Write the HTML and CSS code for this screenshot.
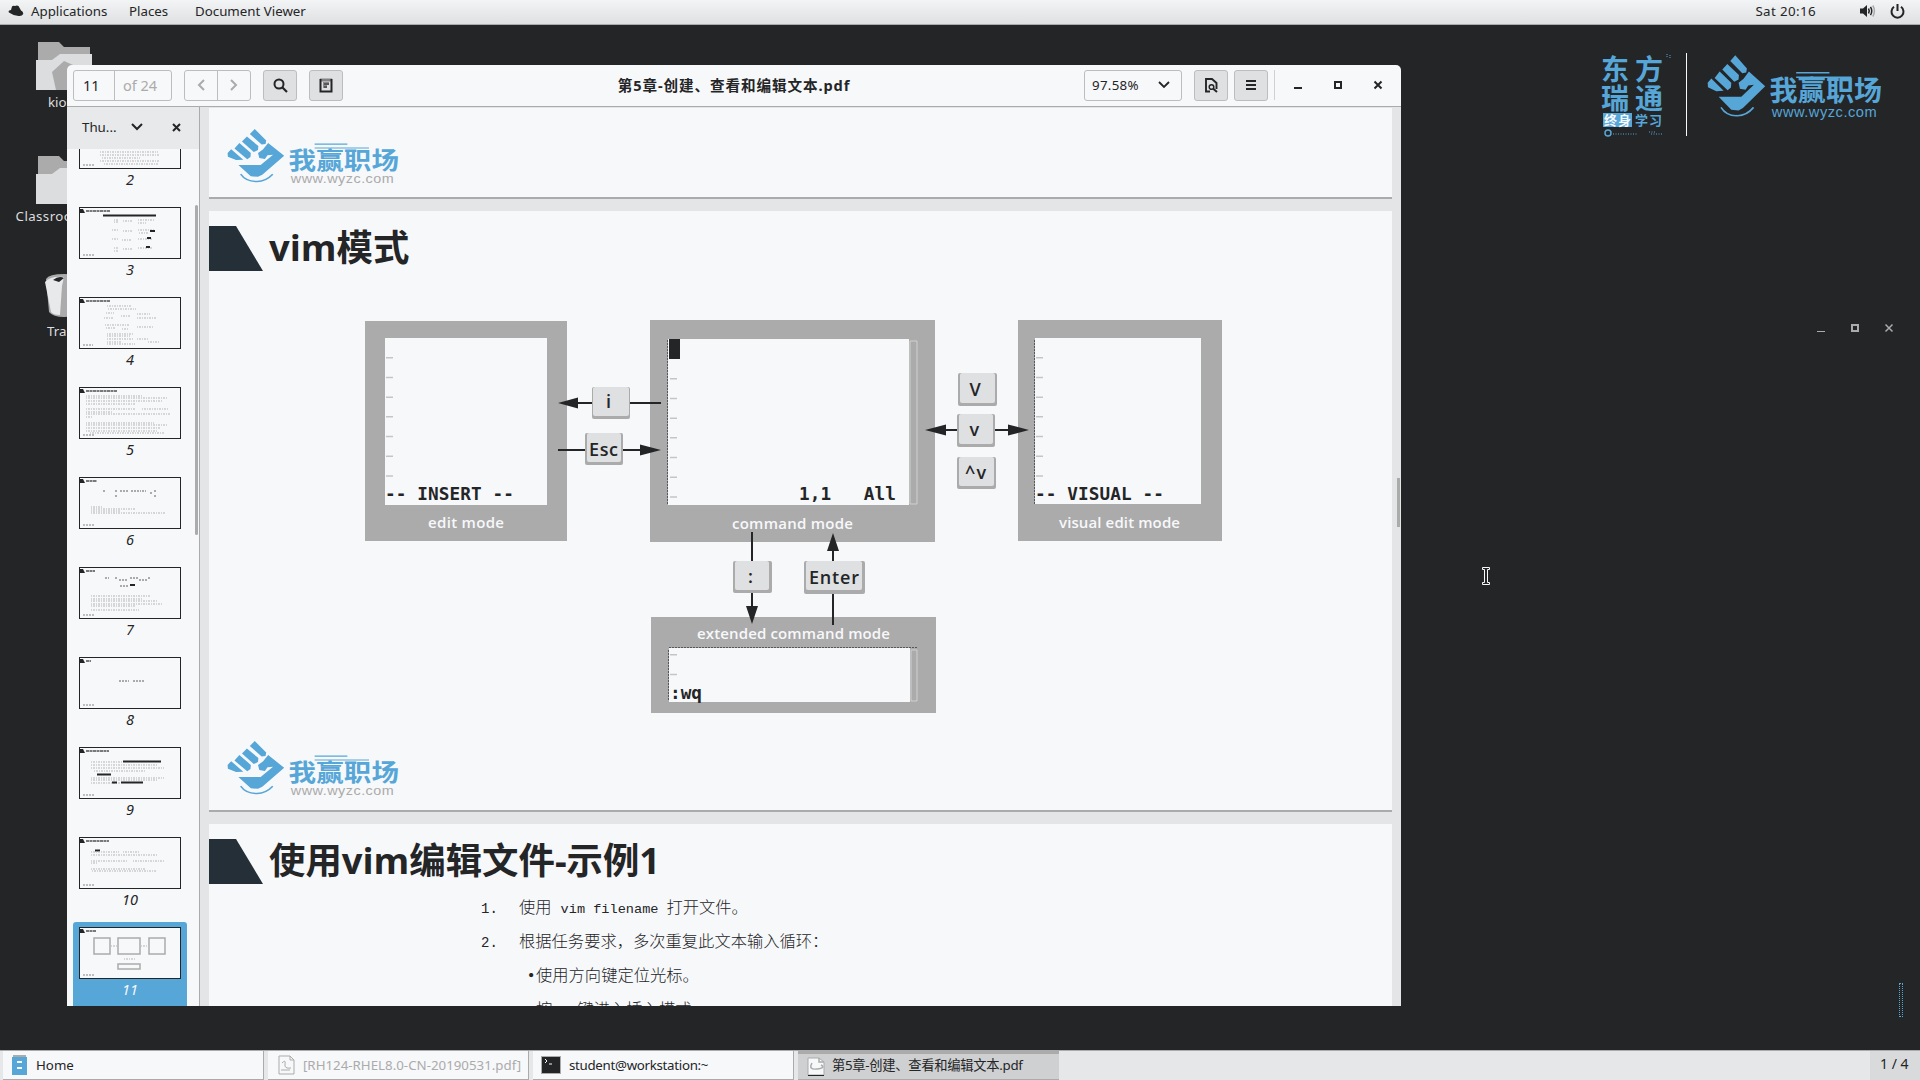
FILE: index.html
```html
<!DOCTYPE html>
<html lang="zh-CN">
<head>
<meta charset="utf-8">
<title>第5章-创建、查看和编辑文本.pdf</title>
<link rel="stylesheet" href="styles.css">
</head>
<body>
<svg class="defs" width="0" height="0">
  <symbol id="brand" viewBox="430 160 550 205" preserveAspectRatio="none">
    <path d="M527 167L562 207L560 219L548 221L512 184ZM503 193L538 226L537 240L524 247L488 210ZM480 216L515 250L514 264L504 272L465 235ZM455 237L492 274L470 275L445 263L444 250Z" fill="currentColor"/>
    <path d="M568 216L617 260L550 326L537 333L515 331L477 292L545 292L583 256L566 258L558 271L541 268L537 250L552 238Z" fill="currentColor"/>
    <path d="M484 324Q500 350 532 349Q560 350 582 324" fill="none" stroke="currentColor" stroke-width="5"/>
    <path d="M710 217H810V222H710ZM710 231H876V235H710Z" fill="currentColor"/>
    <text class="brand-name" x="630" y="306" textLength="338">我赢职场</text>
    <text class="brand-url" x="637" y="353" textLength="315">www.wyzc.com</text>
  </symbol>
</svg>

<header class="topbar">
  <svg width="16" height="12" viewBox="0 0 16 12"><path d="M4 1.5Q5 .3 7 1Q9 0 10.500 1L13 5.500Q15.500 6.500 15.200 9Q14 11.500 10.500 11Q5 10.500 1 7.500Q-.5 5.500 3 5Z" fill="#242527"/></svg>
  <span class="app">Applications</span><span class="places">Places</span><span class="viewer">Document Viewer</span>
  <span class="clock">Sat 20:16</span>
  <svg class="vol" width="16" height="14" viewBox="0 0 16 14"><path d="M0 4.500H3L7 1V13L3 9.500H0Z" fill="#242527"/><path d="M8.500 4.500Q10 7 8.500 9.500M10.500 2.800Q13 7 10.500 11.200" fill="none" stroke="#242527" stroke-width="1.500"/><path d="M12.800 1.500Q16 7 12.800 12.500" fill="none" stroke="#ababab" stroke-width="1.500"/></svg>
  <svg width="15" height="15" viewBox="0 0 15 15"><path d="M4 2.800A6 6 0 1 0 11 2.800M7.500 0V7" fill="none" stroke="#242527" stroke-width="2"/></svg>
</header>

<main class="desktop">
  <div class="shortcut home"><svg width="56" height="48" viewBox="0 0 56 48"><path d="M2 0H23L28 5H54V20H2Z" fill="#ababab"/><path d="M0 18H16L24 12H56V48H0Z" fill="#dcddde"/><path d="M16 30L28 19L44 26V48H20Z" fill="#ababab"/></svg><span>kiosk</span></div>
  <div class="shortcut room"><svg width="56" height="48" viewBox="0 0 56 48"><path d="M2 0H23L28 5H54V20H2Z" fill="#ababab"/><path d="M0 18H16L24 12H56V48H0Z" fill="#dcddde"/></svg><span>Classroom Env</span></div>
  <div class="shortcut trash"><svg width="38" height="44" viewBox="0 0 38 44"><path d="M1 5Q4 0 19 0T37 5L34 38Q30 43 19 43T4 38Z" fill="#ababab"/><path d="M0 8Q5 2 19 3L17 12L15 41Q8 41 6 38Z" fill="#e8e9ea"/><path d="M8 6Q14 1 19 4L14 8Z" fill="#242527"/></svg><span>Trash</span></div>

  <div class="sponsor">
    <svg class="sponsor-left" width="70" height="86" viewBox="0 0 70 86">
      <text class="big" x="1" y="27" textLength="62">东方</text>
      <text class="big" x="1" y="56" textLength="62">瑞通</text>
      <rect x="3" y="60" width="29" height="14" fill="#56a6d8"/>
      <text class="small inv" x="4" y="72" textLength="27">终身</text>
      <text class="small" x="35" y="72" textLength="27">学习</text>
      <path d="M67 1V4M70 2V5" stroke="#56a6d8" stroke-dasharray="1 1"/>
      <circle cx="8" cy="80" r="3" fill="none" stroke="#56a6d8" stroke-width="1.500"/>
      <path d="M13 81H38M49 79H55M51 81H62" fill="none" stroke="#56a6d8" stroke-dasharray="1 1.500"/>
    </svg>
    <i class="rule"></i>
    <svg class="sponsor-brand" width="183" height="68"><use href="#brand"/></svg>
  </div>

  <div class="ghost-controls">
    <svg width="80" height="10" viewBox="0 0 80 10" fill="none" stroke="#ababab"><path d="M1 8.500H9"/><rect x="36" y="2" width="6" height="6" stroke-width="2"/><path d="M69.500 1.500L76.500 8.500M76.500 1.500L69.500 8.500" stroke-width="1.500"/></svg>
  </div>
  <svg class="pointer" width="8" height="18" viewBox="0 0 8 18"><path d="M.5 .5H7.500V2.500H5.500V15.500H7.500V17.500H.5V15.500H2.500V2.500H.5Z" fill="#242527" stroke="#f7f8fa"/></svg>
  <i class="blue-mark"></i>

  <section class="window">
    <div class="headerbar">
      <div class="group">
        <div class="entry"><span class="cur">11</span><span class="total">of 24</span></div>
        <div class="nav"><span><svg width="8" height="12"><path d="M7 1L2 6L7 11" fill="none" stroke="#ababab" stroke-width="2"/></svg></span><span><svg width="8" height="12"><path d="M1 1L6 6L1 11" fill="none" stroke="#ababab" stroke-width="2"/></svg></span></div>
        <div class="btn"><svg width="15" height="15" viewBox="0 0 15 15"><circle cx="6" cy="6" r="4.500" fill="none" stroke="#242527" stroke-width="2"/><path d="M9 9L14 14" stroke="#242527" stroke-width="2.200"/></svg></div>
        <div class="btn"><svg width="14" height="16" viewBox="0 0 14 16"><path d="M1.500 2V14.500H12.500V2" fill="none" stroke="#242527" stroke-width="2"/><path d="M1.500 3H12.500" stroke="#242527" stroke-width="3" stroke-dasharray="1 1"/><path d="M4 5H10V8H8V11H4Z" fill="#8a8b8c"/><path d="M5 7H10M5 10H8" stroke="#242527"/></svg></div>
      </div>
      <h1>第5章-创建、查看和编辑文本.pdf</h1>
      <div class="group right">
        <div class="zoombox"><span>97.58%</span><svg width="12" height="8"><path d="M1 1L6 6L11 1" fill="none" stroke="#242527" stroke-width="1.800"/></svg></div>
        <div class="btn"><svg width="13" height="15" viewBox="0 0 13 15"><path d="M5 13.500H1V1H7L11.500 5V11" fill="none" stroke="#242527" stroke-width="1.900"/><circle cx="6.500" cy="9" r="2.300" fill="none" stroke="#242527" stroke-width="1.500"/><path d="M8 10.500L12 14" stroke="#242527" stroke-width="2"/></svg></div>
        <div class="btn menu"><svg width="10" height="10"><path d="M0 1H10M0 5H10M0 9H10" stroke="#242527" stroke-width="2"/></svg></div>
        <i class="sep"></i>
        <div class="controls"><svg width="90" height="10" viewBox="0 0 90 10" fill="none" stroke="#242527"><path d="M1 8H9" stroke-width="2"/><rect x="42" y="2" width="6" height="6" stroke-width="2"/><path d="M81.500 1.500L88.500 8.500M88.500 1.500L81.500 8.500" stroke-width="2"/></svg></div>
      </div>
    </div>
    <div class="body">
      <aside class="sidebar">
        <div class="side-head"><span>Thu...</span><svg class="chev" width="12" height="8"><path d="M1 1L6 6L11 1" fill="none" stroke="#242527" stroke-width="2"/></svg><svg width="9" height="9"><path d="M1 1L8 8M8 1L1 8" stroke="#242527" stroke-width="2"/></svg></div>
        <div class="thumb-view">
          <ol class="thumbs">
            <li><svg viewBox="0 0 100 50"><path class="t" d="M20 34H78M20 37H80M22 40H60M20 43H80M24 46H78"/><path class="u" d="M3 47H15"/></svg><b>2</b></li>
            <li><svg viewBox="0 0 100 50"><path class="w" d="M0 1H3L5 5H0Z"/><path class="h" d="M6 3H30"/><path class="k" d="M23 7.500H76"/><path class="t" d="M34 12H38M43 13H52M58 12H74M34 14H38M58 15H66M32 22H38M43 23H52M58 22H74M59 25H68M32 31H38M42 32H52M58 31H72M34 40H38M43 41H52M58 40H72M34 43H38"/><path class="k" d="M70 23H75M67 30H71M66 39H70"/><path class="u" d="M3 47H15"/></svg><b>3</b></li>
            <li><svg viewBox="0 0 100 50"><path class="w" d="M0 1H3L5 5H0Z"/><path class="h" d="M6 3H30"/><path class="t" d="M27 8H52M28 11H56M26 15H34M41 18H50M57 16H70M24 20H34M57 20H76M25 27H50M26 30H36M42 31H49M57 29H73M27 36H54M27 38H50M27 41H54M27 44H42M57 41H68M27 46H55M68 44H79"/><path class="u" d="M3 47H13"/></svg><b>4</b></li>
            <li><svg viewBox="0 0 100 50"><path class="w" d="M0 1H3L5 5H0Z"/><path class="h" d="M6 3H37"/><path class="t" d="M6 8H63M6 10H88M6 13H83M6 16H55M6 21H56M62 21H88M6 24H33M6 26H90M6 29H13M6 35H74M6 37H88M6 40H80M6 43H77M10 45H84"/><path class="u" d="M3 47H15"/></svg><b>5</b></li>
            <li><svg viewBox="0 0 100 50"><path class="w" d="M0 1H3L5 5H0Z"/><path class="h" d="M6 3H17"/><path class="d" d="M23 13H26M35 13H38M40 13H48M51 13H61M62 13H66M70 15H73M74 13H77M35 18H38M74 18H77"/><path class="t" d="M11 29H23M11 31H55M11 33H40M11 35H85"/><path class="u" d="M3 47H15"/></svg><b>6</b></li>
            <li><svg viewBox="0 0 100 50"><path class="w" d="M0 1H3L5 5H0Z"/><path class="h" d="M6 3H15"/><path class="d" d="M25 10H29M35 10H38M39 12H48M50 10H58M59 12H67M68 10H71M40 18H49"/><path class="k" d="M50 17H55"/><path class="t" d="M11 28H70M11 31H62M11 33H77M11 36H83M11 38H55M11 42H59"/><path class="u" d="M3 47H15"/></svg><b>7</b></li>
            <li><svg viewBox="0 0 100 50"><path class="w" d="M0 1H3L5 5H0Z"/><path class="h" d="M6 3H11"/><path class="d" d="M39 23H49M53 23H64"/><path class="u" d="M3 47H15"/></svg><b>8</b></li>
            <li><svg viewBox="0 0 100 50"><path class="w" d="M0 1H3L5 5H0Z"/><path class="h" d="M6 3H29"/><path class="t" d="M11 14H42M11 17H78M11 20H84M14 23H65M11 30H84M11 32H78M11 35H40"/><path class="k" d="M43 13.500H81M17 26.500H31M32 34.500H37M41 34.500H63"/><path class="u" d="M3 47H15"/></svg><b>9</b></li>
            <li><svg viewBox="0 0 100 50"><path class="w" d="M0 1H3L5 5H0Z"/><path class="h" d="M6 3H29"/><path class="k" d="M15 12.500H20"/><path class="t" d="M11 14H39M43 14H60M11 17H78M11 23H48M53 23H84M11 25H18M11 31H65M12 33H77"/><path class="u" d="M3 47H15"/></svg><b>10</b></li>
            <li class="selected"><svg viewBox="0 0 100 50"><path class="w" d="M0 1H3L5 5H0Z"/><path class="h" d="M6 3H16"/><path d="M14 10H30V26H14ZM38 10H60V26H38ZM69 10H85V26H69ZM38 36H60V41H38Z" fill="none" stroke="#ababab" stroke-width="1.500"/><path class="t" d="M31 18H38M61 18H68M44 31H55"/><path class="u" d="M3 47H15"/></svg><b>11</b></li>
          </ol>
          <i class="side-scroll"></i>
        </div>
      </aside>
      <div class="document">
        <article class="page first"><svg class="brand" width="180" height="59"><use href="#brand"/></svg></article>
        <article class="page middle">
          <h2><svg width="54" height="45"><path d="M0 0H27L54 45H0Z" fill="#242f37"/></svg><span>vim模式</span></h2>
          <svg class="diagram" width="1183" height="440" viewBox="209 290 1183 440">
            <g fill="#ababab"><path d="M365 321H567V541H365ZM650 320H935V542H650ZM1018 320H1222V541H1018ZM651 617H936V713H651Z"/></g>
            <g fill="#f7f8fa"><path d="M385 338H547V505H385ZM668 339H909V505H668ZM1035 338H1201V504H1035ZM669 648H910V702H669Z"/></g>
            <path d="M910 341H917V504H910ZM911 650H917V701H911Z" fill="none" stroke="#cfd0d1"/>
            <path d="M667.500 340V504M1034.500 340V504M668.500 650V700M669 647.500H917" fill="none" stroke="#55575a" stroke-dasharray="2 1"/>
            <g stroke="#c4c5c6" stroke-width="1.500" fill="none">
              <path d="M389.500 357V480" stroke-width="7" stroke-dasharray="1.500 18.200"/>
              <path d="M673.500 378V500" stroke-width="7" stroke-dasharray="1.500 18.200"/>
              <path d="M1039.500 357V480" stroke-width="7" stroke-dasharray="1.500 18.200"/>
              <path d="M673.500 654V680" stroke-width="7" stroke-dasharray="1.500 18.200"/>
            </g>
            <rect x="669" y="339" width="11" height="20" fill="#242527"/>
            <g class="term">
              <text x="385" y="500" textLength="129">-- INSERT --</text>
              <text x="799" y="500" textLength="97">1,1   All</text>
              <text x="1035" y="500" textLength="129">-- VISUAL --</text>
              <text x="670" y="699" textLength="32">:wq</text>
            </g>
            <g class="mode">
              <text x="428" y="528" textLength="76">edit mode</text>
              <text x="732" y="529" textLength="121">command mode</text>
              <text x="1059" y="528" textLength="121">visual edit mode</text>
              <text x="697" y="639" textLength="193">extended command mode</text>
            </g>
            <path d="M576 403H661M558 450H642M944 430H1010M752 532V608M833 549V625" stroke="#242527" stroke-width="2"/>
            <path d="M558 403L578 397.500V408.500ZM661 450L640 444.500V455.500ZM925 430L946 424.500V435.500ZM1029 430L1008 424.500V435.500ZM752 624L746 606H758ZM833 533L827 551H839Z" fill="#242527"/>
            <g fill="#ababab"><rect x="592" y="387" width="38" height="32" rx="2"/><rect x="585" y="433" width="38" height="32" rx="2"/><rect x="958" y="373" width="39" height="33" rx="2"/><rect x="957" y="414" width="38" height="33" rx="2"/><rect x="957" y="457" width="39" height="32" rx="2"/><rect x="733" y="561" width="39" height="32" rx="2"/><rect x="804" y="561" width="61" height="33" rx="2"/></g>
            <g fill="#dfe0e1"><rect x="593" y="387" width="36" height="29" rx="2"/><rect x="587" y="433" width="34" height="29" rx="2"/><rect x="960" y="373" width="35" height="30" rx="2"/><rect x="959" y="414" width="34" height="30" rx="2"/><rect x="959" y="457" width="35" height="29" rx="2"/><rect x="735" y="561" width="34" height="29" rx="2"/><rect x="806" y="561" width="56" height="29" rx="2"/></g>
            <g class="key">
              <text x="606" y="408">i</text><text x="589" y="456" textLength="29">Esc</text><text x="969.500" y="396">V</text><text x="969.500" y="436">v</text><text x="965" y="479" textLength="21">^v</text><text x="748" y="583">:</text><text x="809" y="584" textLength="50">Enter</text>
            </g>
          </svg>
          <svg class="brand" width="180" height="59"><use href="#brand"/></svg>
        </article>
        <article class="page last">
          <h2><svg width="54" height="45"><path d="M0 0H27L54 45H0Z" fill="#242f37"/></svg><span>使用vim编辑文件-示例1</span></h2>
          <div class="steps">
            <p><span>1.</span>使用<code>vim filename</code>打开文件。</p>
            <p><span>2.</span>根据任务要求，多次重复此文本输入循环：</p>
            <p class="sub">使用方向键定位光标。</p>
            <p class="sub">按<code>i</code>键进入插入模式。</p>
          </div>
        </article>
        <i class="doc-scroll"></i>
      </div>
    </div>
  </section>
</main>

<footer class="taskbar">
  <div class="task"><svg width="17" height="21" viewBox="0 0 17 21"><path d="M2 0H15V3H2Z" fill="#ababab"/><rect x="1" y="2" width="15" height="18" fill="#56a6d8"/><path d="M6 7H11M6 13H11" stroke="#f7f8fa" stroke-width="2"/></svg><span>Home</span></div>
  <div class="task dim"><svg width="20" height="20" viewBox="0 0 20 20" fill="none" stroke="#ababab"><path d="M3 1H14L18 5V19H3ZM14 1V5H18M6 8Q10 4 9 9T15 13M5 15H14"/></svg><span>[RH124-RHEL8.0-CN-20190531.pdf]</span></div>
  <div class="task"><svg width="20" height="18" viewBox="0 0 20 18"><rect x=".5" y=".5" width="19" height="17" fill="#242527" stroke="#ababab"/><path d="M4 3L6 5L4 7M8 8H11" fill="none" stroke="#f7f8fa"/></svg><span class="term-title">student@workstation:~</span></div>
  <div class="task active"><svg width="20" height="20" viewBox="0 0 20 20"><path d="M2 1H13L18 5V18H2Z" fill="#f7f8fa" stroke="#ababab"/><path d="M13 1V5H18M6 6Q2 13 11 12T15 8" fill="none" stroke="#ababab" stroke-width="1.500"/><path d="M2 18.500H18" stroke="#242527"/></svg><span>第5章-创建、查看和编辑文本.pdf</span></div>
  <span class="pager">1 / 4</span>
</footer>
</body>
</html>
```
FILE: styles.css
```css
* { box-sizing: border-box; }
body {
  margin: 0; width: 1920px; height: 1080px; overflow: hidden;
  display: flex; flex-direction: column;
  background: #242527; color: #242527;
  font: 13.3px "Noto Sans", "Noto Sans CJK SC", sans-serif;
}
svg { display: block; flex: none; }
.defs { position: absolute; }

.topbar {
  height: 25px; flex: none; padding: 0 15px 2px 8px;
  display: flex; align-items: center;
  background: linear-gradient(#f3f4f6, #dfe0e1);
  border-bottom: 1px solid #ababab;
}
.topbar .app { margin-left: 7px; width: 98px; }
.topbar .places { width: 66px; }
.clock { margin-left: auto; letter-spacing: .4px; }
.vol { margin: 0 14px 0 44px; }

.desktop { position: relative; flex: 1; overflow: hidden; }
.shortcut {
  position: absolute; left: 4px; width: 120px;
  display: flex; flex-direction: column; align-items: center; gap: 3px;
  color: #dcddde; line-height: 18px; white-space: nowrap;
}
.home { top: 17px; }
.room { top: 131px; }
.room span { letter-spacing: .4px; }
.trash { top: 249px; gap: 4px; }

.sponsor { position: absolute; top: 28px; left: 1600px; display: flex; }
.sponsor .rule { width: 1px; height: 83px; margin: 0 16px; background: #f7f8fa; }
.sponsor-left { overflow: visible; }
.sponsor-left text { fill: #56a6d8; font-weight: 700; font-family: "Noto Sans CJK SC", sans-serif; }
.sponsor-left .big { font-size: 28px; }
.sponsor-left .small { font-size: 13px; }
.sponsor-left .inv { fill: #f7f8fa; }
.brand, .sponsor-brand { color: #56a6d8; }
.sponsor-brand { --url: #56a6d8; }
.brand { --url: #ababab; }
.brand-name { font: 700 84px "Noto Sans CJK SC", sans-serif; fill: currentColor; }
.brand-url { font: 44px "Liberation Sans", sans-serif; fill: var(--url); }

.ghost-controls { position: absolute; left: 1816px; top: 298px; }
.pointer { position: absolute; left: 1482px; top: 542px; }
.blue-mark { position: absolute; left: 1899px; top: 958px; width: 4px; height: 34px; border: 1px dotted #56a6d8; }

.window {
  position: absolute; left: 67px; top: 40px; width: 1334px; height: 941px;
  display: flex; flex-direction: column; overflow: hidden;
  background: #f7f8fa; border-radius: 5px 5px 0 0;
}
.headerbar {
  height: 42px; flex: none; padding: 0 0 1px 6px;
  display: grid; grid-template-columns: 1fr 240px 1fr; align-items: center;
  border-bottom: 1px solid #ababab;
}
.headerbar h1 { margin: 0 6px 0 0; font-size: 14.6px; line-height: 22px; letter-spacing: .9px; font-weight: 700; text-align: center; white-space: nowrap; }
.group { display: flex; align-items: center; gap: 12px; }
.group.right { justify-content: flex-end; padding-right: 18px; }
.entry, .nav, .zoombox, .btn { height: 31px; border: 1px solid #bcbdbe; border-radius: 3px; display: flex; align-items: center; }
.entry { width: 99px; font-size: 14.5px; }
.entry .cur { width: 41px; height: 100%; border-right: 1px solid #bcbdbe; padding: 4px 0 0 9px; }
.entry .total { padding-left: 8px; color: #ababab; }
.nav { width: 67px; }
.nav span { flex: 1; height: 100%; display: flex; align-items: center; justify-content: center; }
.nav span + span { border-left: 1px solid #bcbdbe; }
.btn { width: 34px; justify-content: center; background: #dfe0e1; }
.btn.menu { margin-left: -6px; }
.zoombox { width: 98px; justify-content: space-between; padding: 0 11px 0 7px; }
.zoombox span { letter-spacing: .3px; }
.sep { width: 1px; height: 30px; margin-left: -6px; background: #d0d1d2; }
.controls { margin-left: 6px; }

.body { flex: 1; display: flex; min-height: 0; }
.sidebar { width: 133px; flex: none; border-right: 1px solid #ababab; display: flex; flex-direction: column; }
.side-head { height: 42px; flex: none; padding: 0 18px 2px 15px; display: flex; align-items: center; background: #e8e9ea; }
.side-head .chev { margin: 0 auto 0 14px; }
.thumb-view { flex: 1; min-height: 0; overflow: hidden; position: relative; }
.thumbs { list-style: none; margin: -37px 0 0 6px; padding: 0; width: 114px; }
.thumbs li { height: 90px; padding-top: 5px; display: flex; flex-direction: column; align-items: center; }
.thumbs li svg { width: 102px; height: 52px; border: 1px solid #242527; background: #f7f8fa; }
.thumbs b { font: italic 14.5px/20px "Noto Sans", sans-serif; margin-top: 0; }
.thumbs .selected { background: #56a6d8; border-radius: 3px; color: #f7f8fa; }
.thumbs path { fill: none; }
.thumbs .w { fill: #242527; }
.thumbs .h { stroke: #77797b; stroke-width: 2; stroke-dasharray: 3 .5; }
.thumbs .t { stroke: #b4b5b6; stroke-dasharray: 1 1 2 1; }
.thumbs .d { stroke: #ababab; stroke-width: 2; stroke-dasharray: 2 1; }
.thumbs .u { stroke: #ababab; stroke-dasharray: 2 1; stroke-width: 1.500; }
.thumbs .k { stroke: #242527; stroke-width: 2; }
.side-scroll { position: absolute; right: 1px; top: 56px; width: 3px; height: 330px; border-radius: 2px; background: #ababab; }

.document { position: relative; flex: 1; padding: 1px 9px 0; background: #e4e5e6; overflow: hidden; display: flex; flex-direction: column; gap: 12px; }
.page { flex: none; background: #f7f8fa; border-bottom: 2px solid #ababab; }
.page.first { height: 91px; padding: 19px 0 0 14px; }
.page.middle { height: 601px; padding-top: 15px; }
.page.last { height: 601px; padding-top: 15px; }
.page h2 { margin: 0; height: 45px; display: flex; align-items: center; gap: 6px; font: 700 36.4px/45px "Open Sans", "Noto Sans CJK SC", sans-serif; white-space: nowrap; }
.page h2 span { margin-top: -2px; }
.diagram { margin-top: 19px; }
.middle .brand { margin: 9px 0 0 14px; }
.term { font: 700 17.7px "DejaVu Sans Mono", monospace; fill: #242527; }
.term text { white-space: pre; }
.mode { font: 600 15px "Open Sans", sans-serif; fill: #f7f8fa; }
.key { font: 600 18px "Open Sans", sans-serif; fill: #242527; }
.steps { margin: 5px 0 0 310px; font: 300 16.3px/34px "Noto Sans CJK SC", sans-serif; }
.steps p { margin: 0; height: 34px; display: flex; align-items: baseline; white-space: nowrap; }
.steps p span { width: 0; margin-left: -38px; margin-right: 38px; font: 14px/34px "Liberation Mono", monospace; }
.steps code { font: 13.6px/34px "Liberation Mono", monospace; margin: 0 8px 0 9px; }
.steps .sub { padding-left: 17px; }
.steps .sub::before { content: "·"; width: 0; margin-left: -13px; margin-right: 13px; font-weight: 700; }
.doc-scroll { position: absolute; right: 1px; top: 371px; width: 3px; height: 49px; background: #ababab; }

.taskbar {
  height: 30px; flex: none; padding: 0 0 0 3px;
  display: flex; gap: 4px; white-space: nowrap;
  background: #e6e7e8; border-top: 1px solid #ababab;
}
.task { width: 261px; height: 29px; display: flex; align-items: center; padding-left: 8px; gap: 8px; background: #f7f8fa; border-right: 1px solid #ababab; border-bottom: 1px solid #ababab; }
.task span { line-height: 20px; }
.task.dim { color: #ababab; gap: 7px; }
.task .term-title { letter-spacing: -.3px; }
.task.active { background: #cfd0d1; border-top: 3px solid #ababab; border-right: 0; gap: 6px; }
.task.active span { margin-top: -3px; letter-spacing: -.3px; }
.pager { margin-left: auto; width: 50px; padding: 4px 0 0 10px; background: #d9dadb; line-height: 18px; font-size: 14px; }
```
